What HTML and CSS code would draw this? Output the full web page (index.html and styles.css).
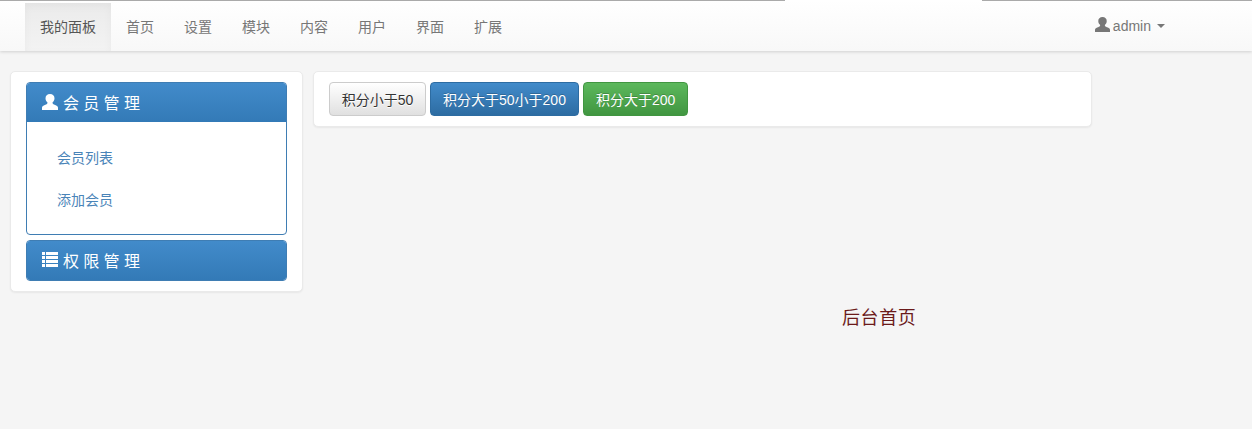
FILE: index.html
```html
<!DOCTYPE html>
<html lang="zh-CN">
<head>
    <meta charset="UTF-8">
    <title>后台首页</title>
    <link rel="stylesheet" href="styles.css">
</head>
<body>

    <!-- Top Navigation -->
    <div class="navbar">
        <div class="top-line">
            <div class="top-line-left"></div>
            <div class="top-line-gap"></div>
            <div class="top-line-right"></div>
        </div>
        <div class="navbar-inner">
            <ul class="nav-list">
                <li class="active"><a href="#">我的面板</a></li>
                <li><a href="#">首页</a></li>
                <li><a href="#">设置</a></li>
                <li><a href="#">模块</a></li>
                <li><a href="#">内容</a></li>
                <li><a href="#">用户</a></li>
                <li><a href="#">界面</a></li>
                <li><a href="#">扩展</a></li>
            </ul>
            <a class="user-menu" href="#">
                <svg class="icon-user-small" viewBox="0 0 16 16"><path d="M8 0C5.200 0 3.500 1.800 3.500 4.200c0 1.700.7 3.100 1.800 4 .3.300.3.900 0 1.300-.5.700-1.500 1.100-3 1.700C.9 11.800 0 12.300 0 13.800V16h16v-2.200c0-1.500-.9-2-2.300-2.600-1.500-.6-2.500-1-3-1.700-.3-.4-.3-1 0-1.300 1.100-.9 1.800-2.300 1.800-4C12.500 1.800 10.800 0 8 0z"/></svg>
                <span>admin</span>
                <span class="caret"></span>
            </a>
        </div>
    </div>

    <!-- Main Content Area -->
    <div class="page">
        <!-- Sidebar -->
        <div class="card sidebar">
            <div class="panel open">
                <div class="panel-heading">
                    <svg class="icon-white" viewBox="0 0 16 16"><path d="M8 0C5.200 0 3.500 1.800 3.500 4.200c0 1.700.7 3.100 1.800 4 .3.300.3.900 0 1.300-.5.700-1.500 1.100-3 1.700C.9 11.800 0 12.300 0 13.800V16h16v-2.200c0-1.500-.9-2-2.300-2.600-1.500-.6-2.500-1-3-1.700-.3-.4-.3-1 0-1.300 1.100-.9 1.800-2.300 1.800-4C12.500 1.800 10.800 0 8 0z"/></svg>
                    <span>会员管理</span>
                </div>
                <ul class="panel-links">
                    <li><a href="#">会员列表</a></li>
                    <li><a href="#">添加会员</a></li>
                </ul>
            </div>
            <div class="panel">
                <div class="panel-heading">
                    <svg class="icon-white" viewBox="0 0 16 16"><path d="M0 0h3v3H0zM4 0h12v3H4zM0 4h3v3H0zM4 4h12v3H4zM0 8h3v3H0zM4 8h12v3H4zM0 12h3v3H0zM4 12h12v3H4z"/></svg>
                    <span>权限管理</span>
                </div>
            </div>
        </div>

        <div class="content">
            <div class="card toolbar">
                <button class="btn btn-default">积分小于50</button>
                <button class="btn btn-primary">积分大于50小于200</button>
                <button class="btn btn-success">积分大于200</button>
            </div>
            <div class="welcome">后台首页</div>
        </div>
    </div>

</body>
</html>
```

FILE: styles.css
```css
body {
    font-family: "Liberation Sans", "Noto Sans CJK SC", sans-serif;
    font-size: 14px;
    margin: 0;
    padding: 0;
    height: 429px;
    overflow: hidden;
    background-color: #f5f5f5;
}

a {
    text-decoration: none;
}

/* Top navigation */
.navbar {
    height: 51px;
    background-image: linear-gradient(to bottom, #ffffff 0, #f8f8f8 100%);
    box-shadow: 0 1px 3px rgba(0, 0, 0, 0.15);
}

.top-line {
    display: flex;
    height: 1px;
}

.top-line-left, .top-line-right {
    background-color: #aaaaaa;
}

.top-line-left {
    width: 785px;
}

.top-line-gap {
    width: 197px;
    background-color: #ffffff;
}

.top-line-right {
    flex: 1;
}

.navbar-inner {
    display: flex;
    justify-content: space-between;
    height: 50px;
    padding: 0 87px 0 25px;
}

.nav-list {
    display: flex;
    list-style-type: none;
    margin: 2px 0 0 0;
    padding: 0;
}

.nav-list li a {
    display: block;
    padding: 15px;
    line-height: 18px;
    color: #777777;
}

.nav-list li.active a {
    color: #555555;
    background-image: linear-gradient(to bottom, #ebebeb 0, #f3f3f3 100%);
    box-shadow: inset 0 3px 9px rgba(0, 0, 0, 0.04);
}

.user-menu {
    display: flex;
    align-items: center;
    height: 50px;
    color: #777777;
}

.icon-user-small {
    width: 15px;
    height: 15px;
    fill: #777777;
    margin-right: 3px;
    margin-bottom: 3px;
}

.caret {
    width: 0;
    height: 0;
    margin-left: 6px;
    border-top: 4px solid #777777;
    border-left: 4px solid transparent;
    border-right: 4px solid transparent;
}

/* Page layout */
.page {
    display: flex;
    align-items: flex-start;
    gap: 10px;
    padding: 20px 160px 0 10px;
}

.card {
    background-color: white;
    border: 1px solid #eaeaea;
    border-radius: 5px;
    box-shadow: 0 1px 2px rgba(0, 0, 0, 0.06);
}

/* Sidebar */
.sidebar {
    width: 261px;
    flex-shrink: 0;
    padding: 10px 15px;
}

.panel {
    border: 1px solid #3f7db3;
    border-radius: 4px;
    overflow: hidden;
}

.panel.open {
    margin-bottom: 5px;
}

.panel-heading {
    display: flex;
    align-items: center;
    box-sizing: border-box;
    height: 39px;
    padding: 0 0 2px 15px;
    color: white;
    font-size: 16px;
    letter-spacing: 4.300px;
    background-image: linear-gradient(to bottom, #428bca 0, #337ab7 100%);
}

.icon-white {
    width: 16px;
    height: 16px;
    fill: white;
    margin-right: 5px;
}

.panel-links {
    list-style-type: none;
    margin: 0;
    padding: 15px 30px 13px;
}

.panel-links li {
    height: 42px;
    line-height: 42px;
    font-size: 14px;
}

.panel-links li a {
    color: #4a84b8;
}

/* Right side */
.content {
    flex: 1;
}

.toolbar {
    display: flex;
    gap: 4px;
    height: 34px;
    padding: 10px 15px;
}

.btn {
    height: 34px;
    padding: 0 12px;
    font-family: inherit;
    font-size: 14px;
    border: 1px solid transparent;
    border-radius: 4px;
    cursor: pointer;
    text-shadow: 0 -1px 0 rgba(0, 0, 0, 0.2);
}

.btn-default {
    width: 97px;
    padding: 0;
    color: #333333;
    border-color: #cccccc;
    background-image: linear-gradient(to bottom, #ffffff 0, #e0e0e0 100%);
    text-shadow: 0 1px 0 #ffffff;
}

.btn-primary {
    color: white;
    border-color: #2d6ca2;
    background-image: linear-gradient(to bottom, #428bca 0, #2d6ca2 100%);
}

.btn-success {
    color: white;
    border-color: #419641;
    background-image: linear-gradient(to bottom, #5cb85c 0, #419641 100%);
}

.welcome {
    margin-top: 179px;
    padding-left: 529px;
    font-size: 18px;
    letter-spacing: 0.600px;
    line-height: 24px;
    color: #6b1a1a;
}
```
